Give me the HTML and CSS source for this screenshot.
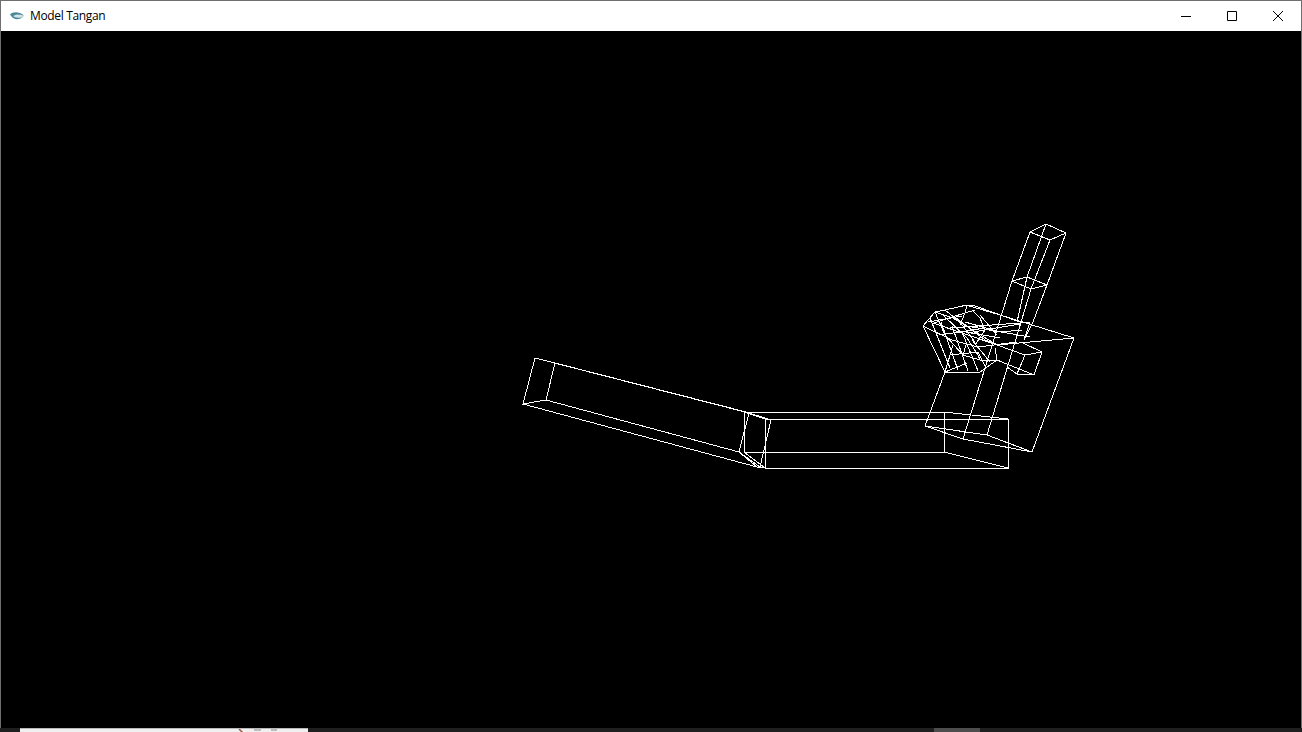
FILE: index.html
```html
<!DOCTYPE html>
<html lang="id">
<head>
<meta charset="utf-8">
<title>Model Tangan</title>
<link rel="stylesheet" href="styles.css">
</head>
<body>
<div class="window">
  <header class="titlebar">
    <svg class="app-icon" viewBox="0 0 16 12" width="16" height="12" aria-hidden="true">
      <ellipse cx="8.5" cy="6" rx="6" ry="3" fill="#b9d3d9"/>
      <path d="M1 4.5C4 1.5 10 1.5 15 5.5C10 3.8 6 4.2 4 6C6 8 10 8.4 13 7.6C9 10.4 4 9.6 1 4.5Z" fill="#4a8896"/>
      <path d="M6 6h7" stroke="#eef4f5" stroke-width="1" fill="none"/>
    </svg>
    <span class="title">Model Tangan</span>
    <div class="controls">
      <button class="ctl" aria-label="Minimize"><svg viewBox="0 0 10 10" width="10" height="10"><path d="M0 5.5H10"/></svg></button>
      <button class="ctl" aria-label="Maximize"><svg viewBox="0 0 10 10" width="10" height="10"><path d="M.5 .5H9.5V9.5H.5Z"/></svg></button>
      <button class="ctl" aria-label="Close"><svg viewBox="0 0 10 10" width="10" height="10"><path d="M0 0L10 10M10 0L0 10"/></svg></button>
    </div>
  </header>
  <main class="canvas">
    <svg class="wire" viewBox="1 31 1300 697" width="1300" height="697" aria-hidden="true">
      <!-- upper arm -->
      <path d="M535 358L555 363L750 413M535 358L745 412M535 358L523 404L546 400L555 363M523 404L757 467M546 400L739 452"/>
      <!-- elbow joint -->
      <path d="M749 413L771 420L760 467L739 452L749 413M739 452L757 467L764 468"/>
      <!-- forearm -->
      <path d="M744 412H944V452H744ZM765 419H1008V468H765ZM944 412L1008 419M944 452L1008 468M744 412L765 419M744 452L765 468"/>
      <!-- palm -->
      <path d="M925 426L963 439L1032 452L1074 338L1000 315L966 305M925 426L987 435L1032 452M925 426L945 372M1074 338L997 345"/>
      <!-- raised finger -->
      <path d="M1030 232L1046 224L1066 233L1050 240ZM1012 281L1027 277L1047 285L1031 289ZM1030 232L1012 281L963 439M1050 240L1031 289L987 435M1066 233L1047 285L1033 322L1024 340M1046 224L1027 277L1017 322"/>
      <!-- thumb -->
      <path d="M1023 343L1042 352L1034 375L997 360M997 345L1025 355L1017 374L1034 375M1042 352L1025 355M1007 367L1017 374"/>
      <!-- curled fingers -->
      <path d="M923 326L935 312L945 310L967 305L975 306L1020 322H1030L1024 340M923 326L945 372L980 372L997 360L995 348"/>
      <path d="M933 323L997 345M935 312L953 318L997 345M934 323L952 317L975 310M923 326L952 340L978 347"/>
      <path d="M950 328L1020 323M967 333L1020 324M978 347L1017 342M972 327L1030 337M960 331L1000 338"/>
      <path d="M953 345L945 372M963 355L967 342M963 355L980 360L997 360M945 372L967 363M943 315L967 338L978 355L980 360"/>
      <path d="M980 315L997 335M972 310L980 318L985 330M967 305L965 313L960 325M945 310L960 322L975 342M935 312L945 335L963 355"/>
      <path d="M955 317L985 340L997 345M965 322L1000 332L1022 330M950 355L978 352L985 366M985 330L975 345"/>
      <path d="M930 318L950 368M941 322L958 370M952 326L968 371M962 332L978 371M928 322L962 316M940 335L985 328M972 340L990 362"/>
    </svg>
  </main>
</div>
<footer class="taskbar">
  <div class="thumb">
    <svg class="thumb-art" viewBox="0 0 50 4" width="50" height="4" aria-hidden="true"><path d="M2 0L6 4" stroke="#a0583c" stroke-width="1.5" fill="none"/><path d="M17 1h7M34 1h6" stroke="#bdbdbd" stroke-width="2" fill="none"/></svg>
  </div>
  <div class="active-task"></div>
</footer>
</body>
</html>
```

FILE: styles.css
```css
html, body {
  margin: 0;
  padding: 0;
  height: 100%;
  background: #1f1f1f;
  overflow: hidden;
}
body {
  display: flex;
  flex-direction: column;
  width: 1302px;
  height: 732px;
}
.window {
  height: 728px;
  display: flex;
  flex-direction: column;
  border: 1px solid #6f6f6f;
  border-bottom: 0;
  box-sizing: border-box;
  background: #000;
}
.titlebar {
  height: 30px;
  flex: none;
  display: flex;
  align-items: center;
  background: #fff;
  padding-left: 8px;
}
.app-icon {
  flex: none;
}
.title {
  margin-left: 5px;
  font: 12px/16px "Open Sans", "Noto Sans", sans-serif;
  color: #000;
  letter-spacing: -0.35px;
}
.controls {
  margin-left: auto;
  display: flex;
  height: 100%;
}
.ctl {
  width: 46px;
  height: 30px;
  padding: 0;
  border: 0;
  background: transparent;
  display: flex;
  align-items: center;
  justify-content: center;
}
.ctl svg {
  fill: none;
  stroke: #000;
  stroke-width: 1;
}
.canvas {
  flex: 1;
  min-height: 0;
  background: #000;
}
.wire {
  display: block;
}
.wire path {
  fill: none;
  stroke: #fff;
  stroke-width: 1;
  shape-rendering: crispEdges;
}
.taskbar {
  height: 4px;
  flex: none;
  display: flex;
  background: #1f1f1f;
  padding-left: 20px;
  overflow: hidden;
}
.thumb {
  width: 288px;
  height: 4px;
  background: #f0f0f0;
  border-top: 1px solid #b8b8b8;
  box-sizing: border-box;
  padding-left: 217px;
  overflow: hidden;
}
.thumb-art {
  display: block;
}
.active-task {
  width: 46px;
  height: 4px;
  margin-left: 626px;
  background: #4d4d4d;
}
```
